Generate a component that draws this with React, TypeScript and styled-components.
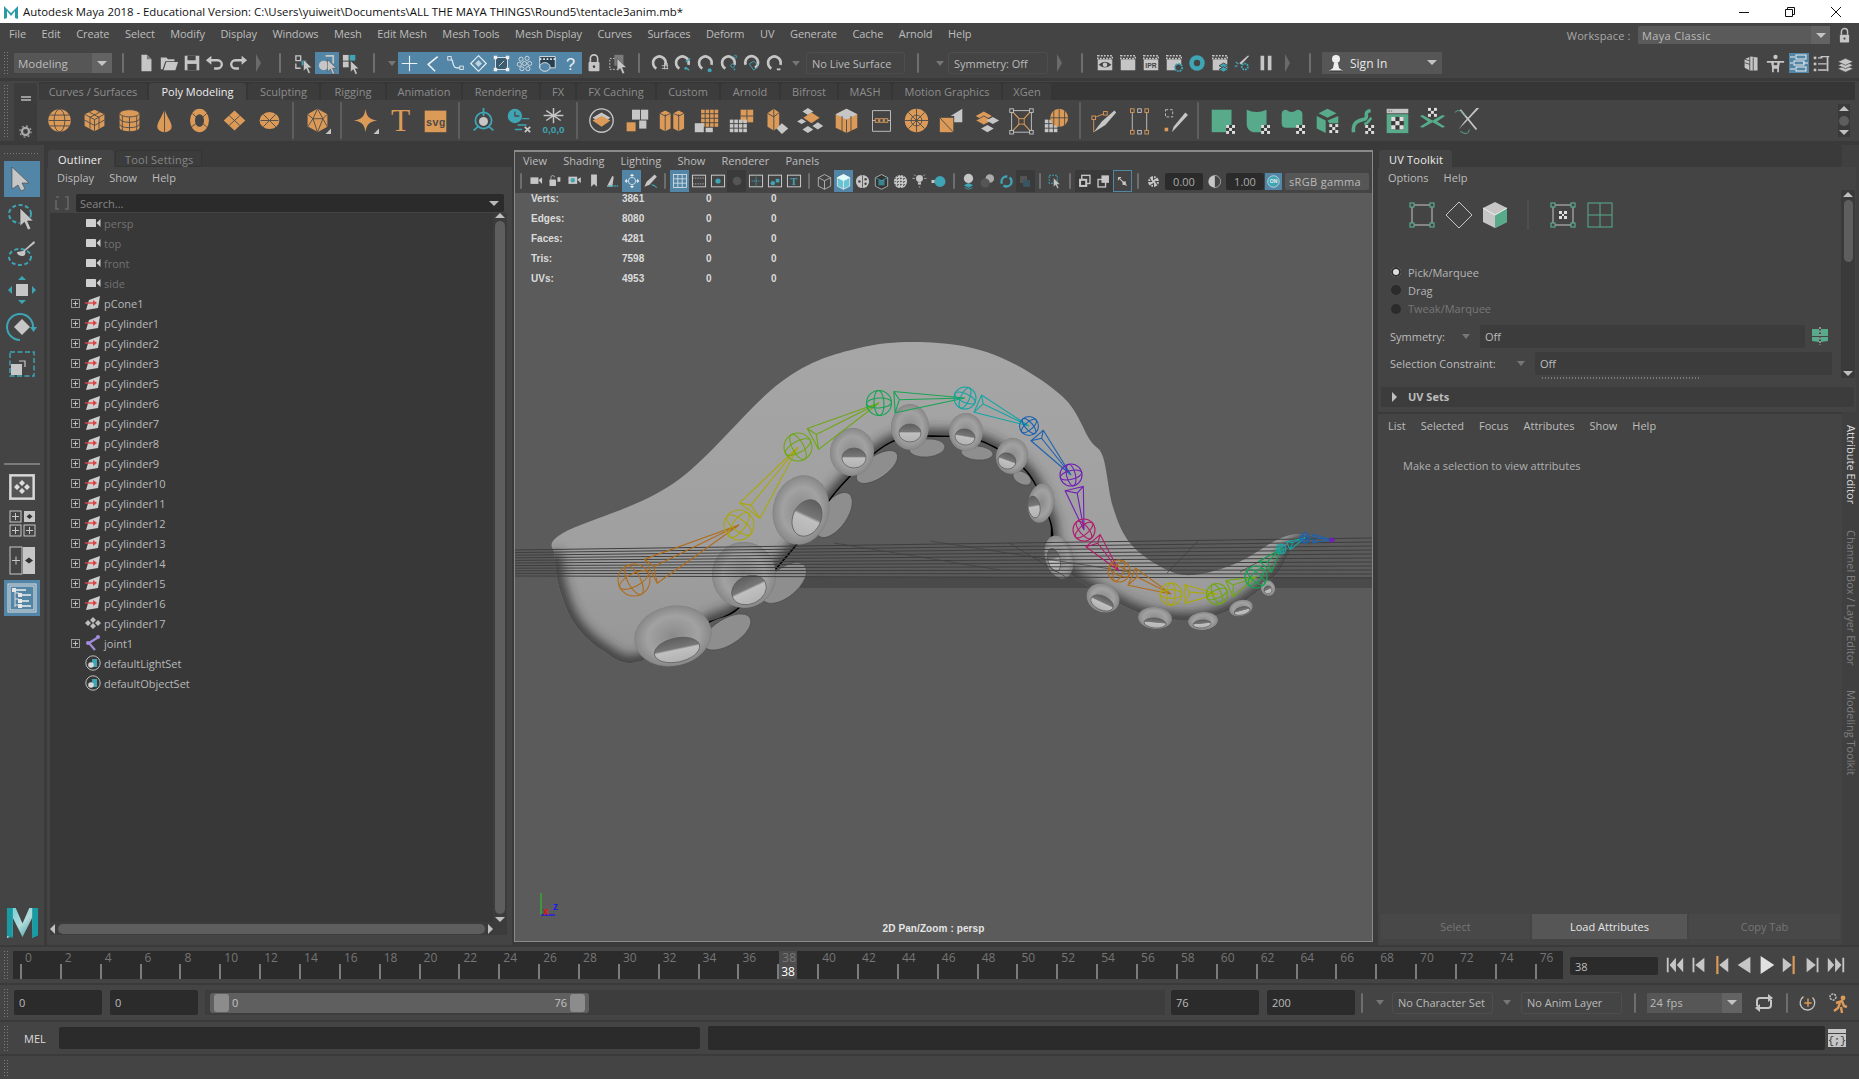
import React from "react";
import styled, { createGlobalStyle } from "styled-components";

const FONT = `"Open Sans", "Noto Sans", "Liberation Sans", sans-serif`;
const G = "#c6c6c6";
const T = "#3fa5b5";
const O = "#dc9a58";
const E = "#58ab8a";
const D = "#444444";
const BLUE = "#5285a6";

const Global = createGlobalStyle`
  html, body { margin: 0; padding: 0; background: #3a3a3a; overflow: hidden; }
  body { font-family: ${FONT}; font-size: 11px; color: #bdbdbd; }
  * { box-sizing: border-box; }
`;

const Page = styled.div`
  width: 1859px; height: 1079px; display: flex; flex-direction: column; background: #3a3a3a; overflow: hidden;
`;
const TitleBar = styled.div`
  height: 23px; flex: none; background: #fff; color: #111; display: flex; align-items: center; padding-left: 3px; font-size: 11.4px;
`;
const TitleText = styled.span` margin-left: 4px; flex: 1; white-space: nowrap; `;
const WinBtn = styled.span` width: 46px; height: 23px; display: flex; align-items: center; justify-content: center; flex: none; `;
const MenuBar = styled.div`
  height: 21px; flex: none; background: ${D}; display: flex; align-items: center; padding-left: 9px; gap: 15.6px; white-space: nowrap; letter-spacing: -0.01em;
`;
const MenuGrow = styled.span` flex: 1; `;
const WorkLabel = styled.span` margin-right: 7px; margin-top: 4px; color: #a8a8a8; letter-spacing: 0.01em; `;
const WorkBox = styled.div`
  width: 192px; height: 19px; margin-top: 4px; margin-right: -12.6px; margin-left: -15px; background: #5a5a5a; border-radius: 2px; display: flex; align-items: center; padding-left: 4px; justify-content: space-between; color: #bbb; letter-spacing: 0.03em;
`;
const BoxArrow = styled.span<{ $w?: number }>`
  width: ${p => p.$w || 19}px; align-self: stretch; background: #636363; display: flex; align-items: center; justify-content: center; flex: none;
  &::after { content: ""; border-left: 5px solid transparent; border-right: 5px solid transparent; border-top: 5px solid #c4c4c4; }
`;
const LockSlot = styled.span` width: 22px; display: flex; justify-content: center; margin-top: 4px; margin-right: 4px; `;

const StatusLine = styled.div`
  height: 34px; padding-top: 4px; flex: none; background: ${D}; display: flex; align-items: center;
`;
const Grip = styled.span<{ $w?: number }>`
  width: ${p => p.$w ?? 14}px; flex: none; align-self: stretch; position: relative;
  &::before { content: ""; position: absolute; left: 3px; top: 3px; bottom: 3px; width: 5px;
    background-image: radial-gradient(circle, #7a7a7a 0.7px, transparent 0.9px); background-size: 3px 3px; }
`;
const Slot = styled.span<{ $w?: number; $on?: boolean; $ring?: boolean; $dark?: boolean }>`
  width: ${p => p.$w || 23}px; height: 22px; flex: none; display: flex; align-items: center; justify-content: center;
  background: ${p => (p.$on ? BLUE : p.$dark ? "#3a3a3a" : "transparent")};
  ${p => p.$ring && `box-shadow: inset 0 0 0 1px ${BLUE};`}
`;
const Sep = styled.span<{ $w?: number; $h?: number }>`
  width: ${p => p.$w || 20}px; flex: none; display: flex; justify-content: center; align-items: center;
  &::after { content: ""; width: 2px; height: ${p => p.$h || 20}px; background: #6e6e6e; border-radius: 1px; }
`;
const DropTri = styled.span<{ $w?: number }>`
  width: ${p => p.$w || 14}px; flex: none; display: flex; justify-content: center;
  &::after { content: ""; border-left: 4px solid transparent; border-right: 4px solid transparent; border-top: 5px solid #767676; }
`;
const Chev = styled.span<{ $w?: number }>`
  width: ${p => p.$w || 20}px; flex: none; display: flex; justify-content: center;
  &::after { content: ""; border-top: 9px solid transparent; border-bottom: 9px solid transparent; border-left: 5px solid #6a6a6a; }
`;
const ModeBox = styled.div`
  width: 98px; height: 20px; flex: none; background: #565656; display: flex; align-items: center; justify-content: space-between; padding-left: 4px; color: #bcbcbd; font-size: 11.5px; border-radius: 1px;
`;
const OutBox = styled.div<{ $w: number }>`
  width: ${p => p.$w}px; height: 22px; flex: none; border: 1px solid #4e4e4e; border-radius: 3px; display: flex; align-items: center; padding-left: 5px; color: #bbb; white-space: nowrap;
`;
const SignIn = styled.div`
  width: 120px; height: 22px; flex: none; background: #565656; display: flex; align-items: center; padding-left: 5px; color: #e8e8e8; font-size: 12px; gap: 5px; position: relative;
  &::after { content: ""; position: absolute; right: 5px; top: 8px; border-left: 5px solid transparent; border-right: 5px solid transparent; border-top: 5px solid #c4c4c4; }
`;
const Grow = styled.span` flex: 1; `;

const Seam = styled.div<{ $h: number }>` height: ${p => p.$h}px; flex: none; background: #3a3a3a; `;

const ShelfArea = styled.div` height: 60px; flex: none; background: ${D}; display: flex; `;
const ShelfSide = styled.div`
  width: 23px; margin-top: 2px; flex: none; background: #3c3c3c; display: flex; flex-direction: column; align-items: center; justify-content: space-between; padding: 10px 0 3px;
`;
const ShelfMain = styled.div` flex: 1; display: flex; flex-direction: column; margin-left: 2px; `;
const ShelfTabs = styled.div` height: 18px; margin-top: 1px; margin-right: 4px; flex: none; background: #363636; display: flex; gap: 2px; `;
const ShelfTab = styled.div<{ $w: number; $on?: boolean }>`
  width: ${p => p.$w}px; margin-top: 1px; background: ${p => (p.$on ? D : "#3c3c3c")}; color: ${p => (p.$on ? "#eee" : "#8c8c8c")}; border-radius: 3px 3px 0 0; display: flex; align-items: center; justify-content: center; white-space: nowrap; flex: none;
`;
const ShelfRow = styled.div` flex: 1; display: flex; align-items: center; padding-left: 2.5px; position: relative; `;
const ShelfCell = styled.span` width: 35px; height: 34px; flex: none; display: flex; align-items: center; justify-content: center; `;
const ShelfSep = styled.span`
  width: 13px; flex: none; display: flex; justify-content: center;
  &::after { content: ""; width: 2px; height: 37px; background: #5e5e5e; }
`;
const ShelfScroll = styled.div`
  position: absolute; right: 9px; top: 4px; width: 12px; height: 33px; background: #3a3a3a; display: flex; flex-direction: column; align-items: center; justify-content: space-between; padding: 2px 0;
`;

const Main = styled.div` flex: none; height: 800px; display: flex; `;
const Toolbox = styled.div`
  width: 44px; flex: none; background: ${D}; display: flex; flex-direction: column; align-items: center; position: relative;
  &::before { content: ""; position: absolute; left: 3px; top: 7px; width: 36px; height: 3px; background-image: radial-gradient(circle, #7a7a7a 0.7px, transparent 0.9px); background-size: 3px 3px; }
`;
const ToolBtn = styled.span<{ $on?: boolean; $h?: number; $mt?: number }>`
  width: 36px; height: ${p => p.$h || 36}px; margin-top: ${p => p.$mt || 0}px; flex: none; display: flex; align-items: center; justify-content: center; background: ${p => (p.$on ? BLUE : "transparent")};
`;
const ToolStack = styled.div` margin-top: 16px; display: flex; flex-direction: column; gap: 1px; `;
const ToolRule = styled.div` width: 36px; height: 2px; background: #7a7a7a; margin-top: 81px; flex: none; `;
const LogoSlot = styled.div` margin-top: auto; margin-bottom: 5px; `;

const Outliner = styled.div` width: 465px; margin-left: 3px; flex: none; display: flex; flex-direction: column; background: ${D}; margin-right: 2px; `;
const TabStrip = styled.div` height: 22px; flex: none; background: #3a3a3a; display: flex; align-items: flex-end; gap: 1px; padding-left: 1px; `;
const PanelTab = styled.div<{ $w: number; $on?: boolean }>`
  width: ${p => p.$w}px; height: 17px; padding-top: 2px; background: ${p => (p.$on ? D : "#3c3c3c")}; color: ${p => (p.$on ? "#eee" : "#868686")}; border-radius: 3px 3px 0 0; padding-left: 10px; display: flex; align-items: center; letter-spacing: 0.02em; ${p => !p.$on && "box-shadow: inset 0 0 0 1px #353535;"}
`;
const PanelMenu = styled.div<{ $pl: number; $h?: number }>`
  height: ${p => p.$h || 20}px; flex: none; display: flex; align-items: center; gap: 15px; padding-left: ${p => p.$pl}px; color: #bdbdbd;
`;
const SearchRow = styled.div` height: 18px; margin-top: 7px; flex: none; display: flex; align-items: center; padding-left: 8px; `;
const SearchBox = styled.div`
  width: 428px; height: 18px; margin-left: 7px; background: #2b2b2b; border-radius: 2px; color: #858585; display: flex; align-items: center; justify-content: space-between; padding: 0 5px 0 4px;
  &::after { content: ""; border-left: 5px solid transparent; border-right: 5px solid transparent; border-top: 5px solid #b8b8b8; }
`;
const TreeFrame = styled.div`
  margin: 1px 5px 10px 3px; flex: 1; background: #383838; display: grid; grid-template-columns: 1fr 14px; grid-template-rows: 1fr 13px; min-height: 0;
`;
const TreeList = styled.div` min-height: 0; overflow: hidden; `;
const TreeRow = styled.div`
  height: 20px; display: flex; align-items: center; padding-left: 21px;
`;
const TreeExp = styled.span`
  width: 14px; flex: none; display: flex;
`;
const ExpBox = styled.span`
  width: 9px; height: 9px; border: 1px solid #9a9a9a; position: relative;
  &::before { content: ""; position: absolute; left: 1px; right: 1px; top: 3px; height: 1px; background: #bdbdbd; }
  &::after { content: ""; position: absolute; top: 1px; bottom: 1px; left: 3px; width: 1px; background: #bdbdbd; }
`;
const TreeIcon = styled.span` width: 16px; height: 16px; flex: none; display: flex; align-items: center; justify-content: center; `;
const TreeLabel = styled.span<{ $dim?: boolean }>` margin-left: 3px; color: ${p => (p.$dim ? "#727272" : "#b9b9b9")}; `;
const VBar = styled.div<{ $h?: boolean }>`
  background: #3c3c3c; display: flex; flex-direction: ${p => (p.$h ? "row" : "column")}; align-items: center; gap: 3px;
`;
const BarThumb = styled.div<{ $h?: boolean }>`
  flex: 1; background: #5e5e5e; border-radius: 5px; ${p => (p.$h ? "height: 10px;" : "width: 10px;")}
`;
const Arrow = styled.span<{ $d: "u" | "d" | "l" | "r" }>`
  flex: none; width: 0; height: 0;
  ${p => p.$d === "u" && "border-left:5px solid transparent;border-right:5px solid transparent;border-bottom:5px solid #c0c0c0;"}
  ${p => p.$d === "d" && "border-left:5px solid transparent;border-right:5px solid transparent;border-top:5px solid #c0c0c0;"}
  ${p => p.$d === "l" && "border-top:5px solid transparent;border-bottom:5px solid transparent;border-right:5px solid #c0c0c0;"}
  ${p => p.$d === "r" && "border-top:5px solid transparent;border-bottom:5px solid transparent;border-left:5px solid #c0c0c0;"}
`;
const Corner = styled.div` background: #3c3c3c; `;

const Viewport = styled.div`
  width: 859px; flex: none; display: flex; flex-direction: column; background: ${D}; border: solid #8a8a8a; border-width: 0 1px 1px 1px; margin-left: 0;
  margin-bottom: 3px; border-top: 2px solid #8a8a8a; margin-top: 5px;
`;
const ViewMenu = styled.div` height: 17px; flex: none; display: flex; align-items: center; padding-left: 8px; gap: 16.2px; `;
const ViewTools = styled.div` height: 24px; flex: none; display: flex; align-items: center; padding-left: 0; `;
const NumField = styled.span<{ $ml?: number }>`
  width: 38px; height: 17px; margin-left: ${p => p.$ml || 0}px; flex: none; background: #2b2b2b; border-radius: 2px; display: flex; align-items: center; justify-content: center; color: #aaa;
`;
const GammaBox = styled.span`
  width: 84px; height: 17px; margin-left: 2px; background: #565656; display: flex; align-items: center; padding-left: 4px; color: #bbb; letter-spacing: 0.03em; border-radius: 2px;
`;
const Canvas = styled.div` flex: 1; background: #5b5b5b; position: relative; overflow: hidden; `;
const SceneSvg = styled.svg` position: absolute; left: 0; top: -1px; `;
const Stats = styled.div`
  position: absolute; left: 16px; top: -5px; display: grid; grid-template-columns: 91px 60px 65px 30px; grid-auto-rows: 20px; align-items: center; font: bold 10px "Liberation Sans", sans-serif; color: #dcdcdc;
`;
const StatZero = styled.span` padding-left: 24px; `;
const Caption = styled.div`
  position: absolute; left: 0; right: 20px; bottom: 7px; text-align: center; font: bold 10px "Liberation Sans", sans-serif; color: #e4e4e4; letter-spacing: 0.01em;
`;

const RightCol = styled.div` width: 481px; margin-left: 5px; flex: none; display: flex; `;
const RightMain = styled.div` width: 464px; flex: none; display: flex; flex-direction: column; `;
const RightTabs = styled.div` height: 22px; flex: none; display: flex; align-items: flex-end; padding-left: 1px; `;
const UvPanel = styled.div` height: 245px; flex: none; background: ${D}; display: grid; grid-template-columns: 463px 1fr; margin-right: -14px; position: relative; `;
const UvBody = styled.div` display: flex; flex-direction: column; `;
const UvIcons = styled.div` height: 40px; margin-top: 8px; flex: none; display: flex; align-items: center; padding-left: 25px; `;
const UvCell = styled.span<{ $w?: number }>` width: ${p => p.$w || 37}px; flex: none; display: flex; align-items: center; justify-content: center; `;
const UvRule = styled.span` width: 2px; height: 30px; background: #4e4e4e; margin: 0 15px 0 14px; flex: none; `;
const RadioList = styled.div` margin-top: 28px; display: flex; flex-direction: column; gap: 0; padding-left: 13px; `;
const RadioRow = styled.div<{ $dim?: boolean }>`
  height: 18.3px; display: flex; align-items: center; gap: 7px; color: ${p => (p.$dim ? "#777" : "#b5b5b5")};
`;
const RadioDot = styled.span<{ $on?: boolean }>`
  width: 10px; height: 10px; border-radius: 50%; background: ${p => (p.$on ? "#ddd" : "#2b2b2b")}; box-shadow: inset 0 0 0 ${p => (p.$on ? "2px #2f2f2f" : "0 #000")};
`;
const FormRow = styled.div<{ $mt?: number }>` height: 23px; margin-top: ${p => p.$mt || 0}px; display: flex; align-items: center; padding-left: 12px; `;
const FormLabel = styled.span<{ $w: number }>` width: ${p => p.$w}px; flex: none; `;
const FormTri = styled(DropTri)` width: 17px; margin-right: 6px; `;
const FormValue = styled.span<{ $w: number }>`
  width: ${p => p.$w}px; height: 23px; margin-left: 0; flex: none; background: #3c3c3c; border-radius: 2px; display: flex; align-items: center; padding-left: 5px;
`;
const DotRule = styled.div`
  margin: 2px 0 0 163px; width: 158px; height: 2px; background-image: radial-gradient(circle, #7a7a7a 0.6px, transparent 0.8px); background-size: 3px 2px;
`;
const SetBar = styled.div`
  height: 20px; margin: 8px 0 0 3px; flex: none; width: 473px; background: #3c3c3c; display: flex; align-items: center; padding-left: 11px; gap: 11px; font-weight: 700; position: relative; border-radius: 2px;
`;
const UvScroll = styled.div`
  position: absolute; left: 463px; top: 23px; width: 14px; height: 188px; background: #3a3a3a; display: flex; flex-direction: column; align-items: center; padding: 2px 0; gap: 3px;
`;
const ScrollThumb = styled.span` width: 9px; height: 62px; background: #5e5e5e; border-radius: 5px; margin-bottom: auto; `;
const AttrPanel = styled.div` flex: 1; margin-top: 2px; background: ${D}; display: flex; flex-direction: column; `;
const AttrMsg = styled.div` margin: 22px 0 0 25px; color: #b0b0b0; `;
const AttrButtons = styled.div` margin-top: auto; margin-bottom: 6px; height: 25px; padding-left: 3px; display: flex; gap: 2px; `;
const AttrBtn = styled.div<{ $w: number; $on?: boolean }>`
  width: ${p => p.$w}px; background: ${p => (p.$on ? "#565656" : "#484848")}; color: ${p => (p.$on ? "#e6e6e6" : "#767676")}; display: flex; align-items: center; justify-content: center; flex: none;
`;
const SideTabs = styled.div` width: 17px; flex: none; background: #404040; display: flex; flex-direction: column; align-items: center; padding-top: 280px; `;
const SideTab = styled.div<{ $h: number; $on?: boolean; $mt?: number }>`
  writing-mode: vertical-rl; height: ${p => p.$h}px; margin-top: ${p => p.$mt || 0}px; color: ${p => (p.$on ? "#d8d8d8" : "#7e7e7e")}; white-space: nowrap; flex: none; line-height: 14px;
`;

const TimeRow = styled.div` height: 36px; flex: none; background: ${D}; display: flex; align-items: flex-start; `;
const Ruler = styled.div` width: 1550px; height: 28px; margin-top: 4px; flex: none; background: #2b2b2b; display: flex; padding-left: 7px; position: relative; `;
const RulerCell = styled.div`
  flex: 0 0 39.86px; height: 28px; position: relative;
  &::after { content: ""; position: absolute; left: 0; bottom: 0; width: 2px; height: 15px; background: #7c7c7c; }
`;
const RulerLabel = styled.span` display: block; padding-left: 5px; color: #767676; line-height: 14px; font-size: 12px; `;
const CurFrame = styled.div`
  position: absolute; left: 766px; top: 14px; width: 18px; height: 14px; color: #fff; display: flex; align-items: flex-end; justify-content: center; font-size: 12px; line-height: 14px;
`;
const CurShade = styled.div` position: absolute; left: 766px; top: 0; width: 18px; height: 28px; background: rgba(122, 122, 122, 0.42); `;
const FrameField = styled.div` width: 88px; height: 18px; margin: 10px 0 0 7px; background: #2b2b2b; border-radius: 2px; display: flex; align-items: center; padding-left: 5px; flex: none; `;
const PlayRow = styled.div` display: flex; height: 26px; margin-top: 5px; margin-left: 5px; align-items: center; `;
const PlayCell = styled.span` width: 23px; height: 22px; flex: none; display: flex; align-items: center; justify-content: center; `;

const RangeRow = styled.div` height: 35px; flex: none; background: ${D}; display: flex; align-items: center; `;
const Field = styled.div<{ $w?: number; $ml?: number }>`
  width: ${p => p.$w || 88}px; height: 25px; margin-left: ${p => p.$ml || 0}px; flex: none; background: #2b2b2b; border-radius: 2px; display: flex; align-items: center; padding-left: 5px; color: #bbb;
`;
const SliderTrack = styled.div` width: 960px; height: 25px; margin-left: 7px; flex: none; background: #3d3d3d; display: flex; align-items: center; padding-left: 5px; `;
const SliderThumb = styled.div`
  width: 379px; height: 20px; background: #5f5f5f; border-radius: 3px; display: flex; align-items: center; padding: 0 4px; color: #c4c4c4; gap: 3px;
`;
const Handle = styled.span` width: 15px; height: 18px; background: #8c8c8c; border-radius: 3px; flex: none; `;
const FpsBox = styled.div`
  width: 95px; height: 20px; flex: none; background: #565656; display: flex; align-items: center; justify-content: space-between; padding-left: 3px; color: #bbb; letter-spacing: 0.03em;
`;
const CmdRow = styled.div` height: 32px; flex: none; background: ${D}; display: flex; align-items: center; `;
const MelLabel = styled.span` width: 45px; padding-left: 10px; flex: none; color: #ddd; `;
const CmdInput = styled.div<{ $w: number; $ml?: number }>`
  width: ${p => p.$w}px; height: ${p => (p.$ml ? 24 : 22)}px; margin-left: ${p => p.$ml || 0}px; flex: none; background: #2b2b2b; border-radius: 2px;
`;
const HelpRow = styled.div` height: 23px; flex: none; background: ${D}; display: flex; `;

const Glyph = styled.svg` display: block; flex: none; overflow: visible; `;
const Ic = ({ s = 20, vb = 22, children }: any) => (
  <Glyph width={s} height={s} viewBox={`0 0 ${vb} ${vb}`}>{children}</Glyph>
);

/* ---------- small drawing helpers ---------- */
const Cur = ({ x = 0, y = 0, k = 1, f = G }: any) => (
  <path transform={`translate(${x} ${y}) scale(${k})`} d="M0 0v14l3.4-3 2.6 6 2.4-1-2.6-6h4.6z" fill={f} stroke="#333" strokeWidth={0.5} />
);
const Chk = ({ x, y }: any) => (
  <g transform={`translate(${x} ${y})`}>
    <rect width={10} height={10} fill="#3a3a3a" />
    <rect width={3.3} height={3.3} fill="#ddd" />
    <rect x={6.6} width={3.3} height={3.3} fill="#ddd" />
    <rect x={3.3} y={3.3} width={3.3} height={3.3} fill="#ddd" />
    <rect y={6.6} width={3.3} height={3.3} fill="#ddd" />
    <rect x={6.6} y={6.6} width={3.3} height={3.3} fill="#ddd" />
  </g>
);
const Mag = ({ extra }: any) => (
  <>
    <path d="M7 17 A7 7 0 1 1 17 13" fill="none" stroke={G} strokeWidth={3} />
    {extra}
  </>
);
const Clap = ({ children }: any) => (
  <>
    <rect x={3} y={3} width={16} height={3} fill="none" stroke={G} strokeDasharray="2 1.4" strokeWidth={1.6} />
    <rect x={3} y={7} width={16} height={12} fill={G} />
    {children}
  </>
);
const Corn = () => <path d="M30 24v6h-6z" fill={G} />;

const sline = (d: string) => <path d={d} fill="none" stroke="#ecf2f5" strokeWidth={1.3} />;

const statusA = [
  <><path d="M6 2h6l5 5v13H6z" fill={G} /><path d="M12 2l5 5h-5z" fill="#7a7a7a" /></>,
  <><path d="M2 5h6l2 2h7v2H7l-3 9H2z" fill={G} /><path d="M8 10h13l-3 9H5z" fill={G} /></>,
  <><path d="M3 3h16v16H3z" fill={G} /><rect x={6} y={3} width={9} height={5} fill={D} /><rect x={6} y={12} width={10} height={7} fill={D} /></>,
  <><path d="M6 8h8a4.5 4.5 0 0 1 0 9h-4" fill="none" stroke={G} strokeWidth={2.6} /><path d="M1 8l6-5v10z" fill={G} /></>,
  <><path d="M16 8H8a4.5 4.5 0 0 0 0 9h4" fill="none" stroke={G} strokeWidth={2.6} /><path d="M21 8l-6-5v10z" fill={G} /></>,
];
const selIcons = [
  <><path d="M3 3h5v5H3zM3 11v5h5" fill="none" stroke={G} strokeWidth={1.4} /><rect x={9} y={8} width={5} height={5} fill={T} /><Cur x={11} y={7} k={0.85} /></>,
  <><path d="M9 3h8v8" fill="none" stroke={G} strokeWidth={1.8} /><circle cx={7} cy={13} r={5} fill={G} /><Cur x={11} y={7} k={0.9} /></>,
  <><rect x={2} y={2} width={6} height={6} fill={G} /><rect x={9} y={2} width={6} height={6} fill={T} /><rect x={2} y={9} width={6} height={6} fill={G} /><Cur x={10} y={8} k={0.85} /></>,
];
const snapIcons = [
  sline("M11 2v18M2 11h18"),
  <><path d="M17 3L6 12l8 8" fill="none" stroke="#ecf2f5" strokeWidth={1.8} /></>,
  <>{sline("M4 5c6 0 2 10 8 11h5")}<rect x={2} y={3} width={4} height={4} fill={BLUE} stroke="#eee" /><rect x={16} y={14} width={4} height={4} fill={BLUE} stroke="#eee" /></>,
  <>{sline("M11 2l9 9-9 9-9-9z")}<path d="M11 7l4 4-4 4-4-4z" fill="#ecf2f5" opacity={0.7} /></>,
  <><rect x={4} y={4} width={14} height={14} fill="#3b5b70" stroke="#eee" /><rect x={2} y={2} width={4} height={4} fill="#eee" /><rect x={16} y={2} width={4} height={4} fill="#eee" /><rect x={2} y={16} width={4} height={4} fill="#eee" /><rect x={16} y={16} width={4} height={4} fill="#eee" /><path d="M14 8L8 14" stroke="#ddd" /></>,
  <g fill="none" stroke="#ddd" strokeWidth={1}><circle cx={7} cy={6} r={2.4} /><circle cx={14} cy={5} r={2.4} /><circle cx={5} cy={12} r={2.4} /><circle cx={11} cy={11} r={2.4} /><circle cx={17} cy={11} r={2.4} /><circle cx={8} cy={17} r={2.4} /><circle cx={15} cy={17} r={2.4} /></g>,
  <><path d="M2 3h18v13H2z" fill="#26404f" stroke="#eee" /><path d="M2 6h18" stroke="#eee" strokeDasharray="2 2" strokeWidth={2} /><ellipse cx={8} cy={15} rx={6} ry={5} fill={BLUE} stroke="#eee" /></>,
  <text x={11} y={18} textAnchor="middle" fontSize={19} fill="#ecf2f5" fontFamily="Liberation Sans">?</text>,
];
const lockIcon = (c = G) => <><path d="M7 10V6a4 4 0 0 1 8 0v4" fill="none" stroke={c} strokeWidth={1.8} /><rect x={5} y={10} width={12} height={10} rx={1} fill={c} /><circle cx={11} cy={15} r={1.4} fill={D} /></>;
const magnets = [
  <Mag extra={<path d="M13 14h7M16 11v7M13 17h7M19 11v7" stroke={G} strokeWidth={1} />} />,
  <Mag extra={<><path d="M14 10l5-4M14 16l4 3" stroke={T} strokeWidth={1.4} /><circle cx={14} cy={17} r={1.5} fill={T} /></>} />,
  <Mag extra={<circle cx={15} cy={19} r={2.2} fill={T} />} />,
  <Mag extra={<><circle cx={15} cy={14} r={2} fill="none" stroke={T} /><circle cx={18} cy={4} r={1.5} fill="none" stroke={T} /><circle cx={17} cy={18} r={1} fill={T} /></>} />,
  <><g transform="rotate(40 11 11)"><Mag /></g><path d="M8 12l5-3 5 5-5 5z" fill="none" stroke={T} /></>,
  <Mag extra={<path d="M13 18h4" stroke={G} strokeWidth={2} />} />,
];
const renders = [
  <Clap><path d="M4 13q7-7 14 0-7 6-14 0z" fill={D} /><circle cx={11} cy={13} r={2.5} fill={G} /></Clap>,
  <Clap />,
  <Clap><text x={11} y={17} textAnchor="middle" fontSize={7.5} fontWeight={700} fill={D} fontFamily="Liberation Sans">IPR</text></Clap>,
  <Clap><circle cx={16} cy={16} r={4} fill={D} stroke={T} strokeWidth={2} strokeDasharray="2 1" /></Clap>,
  <><circle cx={11} cy={11} r={8.5} fill={T} /><circle cx={11} cy={11} r={3.5} fill={D} /></>,
  <Clap><path d="M15 11l5 3-5 3-5-3z" fill={T} stroke={D} /><path d="M15 15l5 3-5 3-5-3z" fill={T} stroke={D} /></Clap>,
  <><path d="M18 3L9 13l-2-2 9-8z" fill={G} /><circle cx={13} cy={15} r={3.4} fill="none" stroke={T} strokeWidth={2} strokeDasharray="2 1" /><path d="M3 10l3 2M2 15l3-1" stroke={T} strokeWidth={1.4} /></>,
  <><rect x={5} y={3} width={4} height={16} fill={G} /><rect x={13} y={3} width={4} height={16} fill={G} /></>,
];
const rightIcons = [
  <><path d="M3 6l7-3 8 1v15h-9l-6-3z" fill={G} /><path d="M9 3v16M3 10l6 2M3 6l6 2M13 4v15" stroke={D} strokeWidth={1} /></>,
  <><circle cx={11} cy={3.5} r={2.5} fill={G} /><path d="M1 8h20v2h-5l-1 6v5h-2v-4h-4v4H7v-5L6 10H1z" fill={G} /><rect x={9} y={10} width={4} height={3} fill={D} /></>,
  <><rect x={1} y={1} width={20} height={20} fill={BLUE} /><g fill="none" stroke="#eee"><path d="M2 5h5M2 11h3M2 17h5M15 11h5" /><rect x={8} y={3} width={10} height={4} /><rect x={6} y={9} width={10} height={4} /><rect x={8} y={15} width={10} height={4} /></g></>,
  <><g fill={G}><rect x={2} y={3} width={3} height={3} /><rect x={2} y={10} width={3} height={3} /><rect x={2} y={17} width={3} height={3} /></g><path d="M7 4.5h5M7 11.5h10M7 18.5h10M10 3h10" stroke={G} strokeWidth={1.5} /><path d="M18 3v17" stroke={G} strokeWidth={2} /></>,
  <g fill={G} stroke={D} strokeWidth={0.8}><path d="M11 13l9 4-9 4-9-4z" /><path d="M11 9l9 4-9 4-9-4z" /><path d="M11 5l9 4-9 4-9-4z" /></g>,
];

const L = "#4a4a4a";
const shelfIcons: any[] = [
  <><circle cx={15} cy={15} r={12.5} fill={O} /><g fill="none" stroke={L} strokeWidth={1}><ellipse cx={15} cy={15} rx={6} ry={12.5} /><path d="M4 9h22M3 15h24M4 21h22" /></g></>,
  <><path d="M15 3l11 5v13l-11 6-11-6V8z" fill={O} /><path d="M4 8l11 6 11-6M15 14v13M9 5.5l11 6M21 5.5l-11 6M10 11v13M20 11v13M4 14.5l11 6 11-6" fill="none" stroke={L} /></>,
  <><path d="M4 7h22v16a11 4 0 0 1-22 0z" fill={O} /><ellipse cx={15} cy={7} rx={11} ry={4} fill={O} stroke={L} /><path d="M4 13a11 4 0 0 0 22 0M4 19a11 4 0 0 0 22 0M15 11v18M7 10v16M23 10v16" fill="none" stroke={L} /></>,
  <><path d="M15 3c3 8 8 14 8 19a8 6 0 0 1-16 0c0-5 5-11 8-19z" fill={O} /><path d="M15 3v25" stroke={L} /></>,
  <><ellipse cx={15} cy={15} rx={10.5} ry={13} fill={O} /><ellipse cx={15} cy={15} rx={5} ry={7} fill={D} /><path d="M7 7l5 5M23 7l-5 5M6 22l6-4M23 22l-5-4" stroke={L} /></>,
  <><path d="M15 4l12 11-12 11L3 15z" fill={O} /><path d="M9 9.5l12 11M21 9.5l-12 11" stroke={L} /></>,
  <><ellipse cx={15} cy={15} rx={11} ry={9.5} fill={O} /><path d="M5 15h20M8 8l14 14M22 8L8 22" stroke={L} /></>,
  "s",
  <><path d="M15 2l11 6v14l-11 6-11-6V8z" fill={O} /><path d="M15 2l-5 11 11 0zM4 8l6 5-6 9 11 6 6-15 5-5M10 13l5 15M21 13l5 9" fill="none" stroke={L} /><Corn /></>,
  "s",
  <><path d="M15 2c1 8 4 12 13 13-9 1-12 5-13 13-1-8-4-12-13-13 9-1 12-5 13-13z" fill={O} /><Corn /></>,
  <text x={15} y={27} textAnchor="middle" fontFamily="Liberation Serif" fontWeight={400} fontSize={35} fill={O}>T</text>,
  <><rect x={3} y={4} width={24} height={24} fill={O} /><text x={15} y={21} textAnchor="middle" fontSize={12} fontWeight={700} fill={L} fontFamily="Liberation Mono">svg</text></>,
  "s",
  <><path d="M15 1v9M4 26l6-5M26 26l-6-5" stroke={T} strokeWidth={2} /><circle cx={15} cy={15} r={9} fill="none" stroke={T} strokeWidth={2} /><circle cx={15} cy={16} r={5} fill={G} /></>,
  <><circle cx={11} cy={10} r={8} fill={T} /><path d="M11 5v5h5" stroke={L} strokeWidth={1.5} fill="none" /><path d="M19 13h8M14 20h10M11 25h8" stroke={T} strokeWidth={1.4} /><path d="M22 22l6 6M28 22l-6 6" stroke={G} strokeWidth={2} /></>,
  <><g stroke={G} strokeWidth={1.6}><path d="M15 1v17M7 4l16 11M23 4L7 15M4 9.5h22" /></g><text x={15} y={29} textAnchor="middle" fontSize={11} fontWeight={700} fill={T} fontFamily="Liberation Sans">0,0,0</text></>,
  "s",
  <><circle cx={15} cy={15} r={13} fill="none" stroke={G} strokeWidth={1.5} /><path d="M15 6l10 6-10 6-10-6z" fill={G} /><path d="M5 15l10-5 10 5-10 7z" fill={O} /></>,
  <><rect x={4} y={17} width={10} height={10} fill={O} /><rect x={10} y={3} width={9} height={11} fill={G} /><rect x={20} y={3} width={8} height={11} fill={G} /><rect x={18} y={15} width={8} height={9} fill={G} /></>,
  <><path d="M2 7l6-3 6 3v17l-6 3-6-3z M17 7l6-3 6 3v17l-6 3-6-3z" fill={O} /><path d="M8 8v19M23 8v19M2 7l6 3 6-3M17 7l6 3 6-3" fill="none" stroke={L} /></>,
  <><g fill={O}>{[9, 14, 19, 24].map(x => [3, 8, 13, 18].map(y => <rect key={`${x}${y}`} x={x} y={y} width={4} height={4} />))}</g><rect x={2} y={18} width={10} height={10} fill={G} /><rect x={14} y={23} width={8} height={5} fill={G} /></>,
  <><path d="M14 3h14v14H14z" fill={O} /><path d="M21 3v14M14 10h14" stroke={L} /><g fill={G}>{[2, 7, 12, 17].map(x => [14, 19, 24].map(y => <rect key={`${x}${y}`} x={x} y={y} width={4} height={4} />))}</g></>,
  <><path d="M5 7l7-5 6 4v16l-6 4-7-4z" fill={O} /><path d="M12 2v24M5 7l7 4 6-5" fill="none" stroke={L} /><path d="M21 18l7 6-7 6-6-6z" fill={G} /></>,
  <g fill={G}><path d="M11 1l6 4-6 4-6-4zM22 17l6 4-6 4-6-4zM11 21l6 4-6 4-6-4z" /><path d="M6 12l9-6 9 6-9 6z" fill={O} /><path d="M4 13l5 3-5 3-5-3z" /></g>,
  <><path d="M15 2l12 6v15l-12 6-12-6V8z" fill={O} /><path d="M15 2l12 6-12 6-12-6z" fill={G} /><path d="M15 14v15M10 10v17M20 10v17" stroke={L} fill="none" /></>,
  <><g fill="none" stroke={G}><path d="M5 4h20v23H5z" /><path d="M5 15h20" /></g><rect x={8} y={13} width={4} height={4} fill={L} stroke={O} /><rect x={13} y={13} width={4} height={4} fill={L} stroke={O} /><rect x={18} y={13} width={4} height={4} fill={L} stroke={O} /></>,
  <><circle cx={15} cy={15} r={13} fill={O} /><circle cx={15} cy={15} r={6} fill="none" stroke={L} /><path d="M2 15h26M15 2v26M6 6l18 18M24 6L6 24" stroke={L} /></>,
  <><path d="M2 12h15v16H2z" fill={O} /><path d="M2 12l15 16" stroke={L} /><path d="M14 10L27 2v15h-9V10z" fill={G} /></>,
  <><path d="M12 5l9 5-9 5-9-5z" fill={O} /><path d="M12 10l9 5-9 5-9-5z" fill={O} stroke={L} /><path d="M22 11l7 4-7 4-7-4z M16 20l7 4-7 4-7-4z" fill={G} /></>,
  <><path d="M4 4h22v24H4z" fill="none" stroke={G} /><path d="M4 4l22 24M26 4L4 28" stroke={O} strokeWidth={1.2} /><rect x={12} y={13} width={6} height={6} fill={D} stroke={O} /><g fill={D} stroke={G}><rect x={2} y={2} width={4} height={4} /><rect x={24} y={2} width={4} height={4} /><rect x={2} y={26} width={4} height={4} /><rect x={24} y={26} width={4} height={4} /></g></>,
  <><g fill={G}>{[2, 7, 12].map(x => [14, 19, 24].map(y => <rect key={`${x}${y}`} x={x} y={y} width={4} height={4} />))}</g><ellipse cx={18} cy={12} rx={10} ry={10} fill={O} /><path d="M8 12h20M18 2v20M12 4v16M24 4v16" stroke={L} fill="none" /></>,
  "s",
  <><path d="M3 12l13-5M3 12v16" stroke={O} fill="none" /><path d="M3 28l9-12 14-12 2 2-12 14z" fill={G} /><rect x={1} y={10} width={4} height={4} fill={D} stroke={O} /><rect x={14} y={5} width={4} height={4} fill={D} stroke={O} /></>,
  <><path d="M7 4v24M23 4v24" stroke={G} /><g fill={D} stroke={O}><rect x={5} y={2} width={4} height={4} /><rect x={21} y={2} width={4} height={4} /><rect x={5} y={26} width={4} height={4} /><rect x={21} y={26} width={4} height={4} /></g><rect x={13} y={2} width={4} height={4} fill={D} stroke={G} /><rect x={13} y={26} width={4} height={4} fill={D} stroke={G} /></>,
  <><path d="M5 3h8v8H5z" fill="none" stroke={G} strokeDasharray="3 2" /><rect x={4} y={23} width={4} height={4} fill={O} /><path d="M12 28l2-6 13-16 3 3-14 15z" fill={G} /></>,
  "s",
  <><path d="M3 3h22v25H3z" fill={E} /><Chk x={19} y={20} /></>,
  <><path d="M3 3q11 5 22 0v25H10q-7-2-7-9z" fill={E} /><Chk x={19} y={20} /></>,
  <><path d="M3 8q0-5 5-5 6 5 12 0 6 0 6 5v15H8q-5 0-5-5z" fill={E} /><Chk x={19} y={20} /></>,
  <><path d="M15 2l10 5-10 5-10-5z" fill={E} /><path d="M3 10l10 5v14l-10-5zM27 10v8h-10l-2-3z" fill={E} /><Chk x={17} y={19} /></>,
  <><path d="M24 4c-10 2 0 8-8 10-8 2-12 4-11 14" fill="none" stroke={E} strokeWidth={4} /><path d="M25 12c-3 2-3 6-8 7" fill="none" stroke={E} strokeWidth={3} /><Chk x={18} y={20} /></>,
  <><rect x={3} y={2} width={24} height={5} fill={G} /><path d="M5 4.5h4" stroke={D} strokeDasharray="1.5 1.5" /><rect x={3} y={8} width={24} height={21} fill={E} /><g transform="translate(8 11) scale(1.4)"><Chk x={0} y={0} /></g></>,
  <><g fill={E}><path d="M1 10l9 6-9 6 3 1 11-6 11 6 3-1-9-6 9-6-3-1-11 6-11-6z" /></g><Chk x={10} y={1} /></>,
  <><path d="M7 3l18 22" stroke={G} strokeWidth={2} /><path d="M28 1L13 17l-5 5-3 3 6-8L25 1z" fill={G} /><path d="M1 6q6-6 12 4M7 27q9 6 10-2" fill="none" stroke={E} /></>,
];

const viewIcons: any[][] = [
  [
    <><rect x={2} y={6} width={11} height={9} fill={G} /><path d="M13 10l5-4v9z" fill={G} /></>,
    <><rect x={2} y={9} width={9} height={9} rx={1} fill={G} /><path d="M4 9V6a2.5 2.5 0 0 1 5 0" stroke={G} fill="none" /><path d="M13 6h4v6h-4zM19 5v8z" fill={G} /></>,
    <><rect x={2} y={5} width={12} height={10} fill={G} /><circle cx={8} cy={10} r={3} fill={T} /><path d="M14 9l5-3v8z" fill={G} /></>,
    <path d="M7 2h8v17l-4-4-4 4z" fill={G} />,
    <><path d="M3 18L10 4l2 1-2 14H3z" fill={G} /><path d="M4 18h14" stroke={T} strokeDasharray="2 1" strokeWidth={2} /></>,
    <><path d="M2 11h18M11 2v18" stroke="#eee" /><circle cx={11} cy={11} r={5} fill={BLUE} stroke="#eee" /><path d="M11 1l-3 3h6zM11 21l-3-3h6zM1 11l3-3v6zM21 11l-3-3v6z" fill="#eee" /></>,
    <><path d="M2 19l3-7L16 2l3 3L9 16z" fill={G} /><path d="M12 16q4 1 7 4" stroke={T} fill="none" strokeWidth={1.6} /></>,
  ],
  [
    <><rect x={2} y={2} width={18} height={18} fill="none" stroke="#eee" /><path d="M2 8h18M2 14h18M8 2v18M14 2v18" stroke="#eee" /></>,
    <><rect x={2} y={3} width={18} height={16} fill="none" stroke={G} strokeWidth={1.4} /><path d="M2 7h18M2 15h18" stroke={G} strokeDasharray="2 1.4" /></>,
    <><rect x={2} y={3} width={18} height={16} fill="none" stroke={G} strokeWidth={1.4} /><circle cx={11} cy={11} r={3.6} fill={T} /></>,
    <><circle cx={11} cy={11} r={6} fill="#555" /></>,
    <><rect x={2} y={3} width={18} height={16} fill="none" stroke={G} strokeWidth={1.4} /><path d="M11 3v16M5 11h12" stroke={T} strokeDasharray="1.6 1.2" strokeWidth={1.4} /></>,
    <><rect x={2} y={3} width={18} height={16} fill="none" stroke={G} strokeWidth={1.4} /><circle cx={8} cy={14} r={3} fill={T} /><path d="M12 8h5v5h-5z" fill={T} /></>,
    <><rect x={2} y={3} width={18} height={16} fill="none" stroke={G} strokeWidth={1.4} /><text x={11} y={17} textAnchor="middle" fontSize={14} fontWeight={700} fill={T} fontFamily="Liberation Serif">T</text></>,
  ],
  [
    <><path d="M11 2l8 4v11l-8 4-8-4V6z" fill="none" stroke={G} /><path d="M3 6l8 4 8-4M11 10v11" fill="none" stroke={G} /></>,
    <><path d="M11 2l8 4v11l-8 4-8-4V6z" fill="#68c3d2" stroke="#eee" /><path d="M3 6l8 4 8-4-8-4zM11 10v11" fill="#dff" stroke="#eee" /></>,
    <><circle cx={11} cy={11} r={8.5} fill={G} /><path d="M11 3v16" stroke={D} /><circle cx={15} cy={8} r={1.6} fill={D} /><circle cx={15} cy={14} r={1.6} fill={D} /><circle cx={7} cy={11} r={1.6} fill={D} /></>,
    <><path d="M11 2l8 4v11l-8 4-8-4V6z" fill="#333" stroke={G} /><path d="M3 6l8 4 8-4" fill="none" stroke={T} /><path d="M7 9h8v7H7z" fill={T} opacity={0.7} /></>,
    <><circle cx={11} cy={11} r={8.5} fill={G} /><path d="M3 7h16M3 11h16M3 15h16M7 3v16M11 2v18M15 3v16" stroke={D} strokeDasharray="2 2" /></>,
    <><circle cx={11} cy={7} r={4.5} fill={G} /><rect x={9} y={12} width={4} height={3} fill={G} /><path d="M2 7h3M17 7h3M4 2l2 2M18 2l-2 2M10 18h2" stroke={G} /></>,
    <><circle cx={13} cy={11} r={7} fill={T} /><rect x={2} y={9} width={4} height={4} fill={G} /></>,
  ],
  [
    <><circle cx={11} cy={7} r={6} fill={G} /><path d="M5 16l6-3 6 3-6 3z" fill={T} /><path d="M6 19l5 2 5-2" stroke={T} fill="none" /></>,
    <><circle cx={14} cy={7} r={5.5} fill="#aaa" /><circle cx={8} cy={13} r={6} fill="#555" /></>,
    <circle cx={11} cy={11} r={6.5} fill="none" stroke={T} strokeWidth={3} strokeDasharray="14 3" />,
    <><rect x={4} y={4} width={9} height={9} fill="#555" /><rect x={8} y={9} width={9} height={9} fill="#3a5560" /></>,
  ],
  [<><path d="M3 3h11v11H3z" fill="none" stroke={T} strokeDasharray="2.5 1.5" strokeWidth={1.4} /><Cur x={9} y={7} k={0.85} /></>],
  [
    <><rect x={7} y={2} width={12} height={12} fill="none" stroke={G} strokeWidth={2} /><rect x={3} y={7} width={12} height={12} fill={G} /><rect x={6} y={10} width={6} height={6} fill="#333" /></>,
    <><rect x={8} y={2} width={11} height={11} fill={G} /><rect x={3} y={8} width={11} height={11} fill="none" stroke={G} strokeWidth={2} /></>,
    <><path d="M5 5l12 12M5 5v4M5 5h4" stroke={G} strokeWidth={1.5} fill="none" /><rect x={11} y={11} width={5} height={5} fill={G} /></>,
  ],
];

const SETS = ["persp", "top", "front", "side"];
const MESHES = ["pCone1", "pCylinder1", "pCylinder2", "pCylinder3", "pCylinder5", "pCylinder6", "pCylinder7", "pCylinder8", "pCylinder9", "pCylinder10", "pCylinder11", "pCylinder12", "pCylinder13", "pCylinder14", "pCylinder15", "pCylinder16"];

const CamIcon = () => <Ic s={15} vb={15}><rect x={0} y={3} width={10} height={8} rx={0.6} fill="#d0d0d0" /><path d="M10.5 7l4-4v8z" fill="#d0d0d0" /></Ic>;
const XformIcon = () => <Ic s={16} vb={16}><path d="M4 5L15 1l-2 12-12 2z" fill="#cfcfcf" /><path d="M0 8h10" stroke="#d44" strokeWidth={1.4} /><path d="M12 8l-4-3v6z" fill="#d44" /></Ic>;
const MeshIcon = () => <Ic s={16} vb={16}><g fill="#bdbdbd"><path d="M8 2l3 3-3 3-3-3zM8 8l3 3-3 3-3-3zM3 5l3 3-3 3-3-3zM13 5l3 3-3 3-3-3z" /></g></Ic>;
const JointIcon = () => <Ic s={16} vb={16}><path d="M12 3L4 8l6 7" fill="none" stroke="#a58cdc" strokeWidth={2.2} /><circle cx={13} cy={2} r={2} fill="#a58cdc" /><circle cx={3} cy={8} r={2} fill="#a58cdc" /></Ic>;
const SetIcon = () => <Ic s={16} vb={16}><circle cx={8} cy={8} r={7.2} fill="none" stroke="#bdbdbd" /><rect x={7} y={4} width={5} height={8} fill={T} /><circle cx={6} cy={10} r={2.8} fill="#d8d8d8" /></Ic>;

/* ---------- scene ---------- */
type P = [number, number];
const smooth = (p: P[]) => {
  let d = `M${p[0][0]} ${p[0][1]}`;
  for (let i = 0; i < p.length - 1; i++) {
    const a = p[i - 1] || p[i], b = p[i], c = p[i + 1], e = p[i + 2] || c;
    d += `C${(b[0] + (c[0] - a[0]) / 6).toFixed(1)} ${(b[1] + (c[1] - a[1]) / 6).toFixed(1)} ${(c[0] - (e[0] - b[0]) / 6).toFixed(1)} ${(c[1] - (e[1] - b[1]) / 6).toFixed(1)} ${c[0]} ${c[1]}`;
  }
  return d;
};
const TOP: P[] = [[554, 553], [563, 533], [674, 483], [781, 382], [859, 348], [938, 343], [1002, 358], [1063, 397], [1090, 440], [1103, 457], [1113, 507], [1130, 543], [1163, 568], [1193, 575], [1237, 563], [1277, 540], [1300, 534], [1327, 540]];
const LOW: P[] = [[1327, 540], [1297, 543], [1280, 570], [1263, 587], [1230, 610], [1190, 620], [1140, 613], [1090, 587], [1070, 573], [1052, 543], [1049, 520], [1027, 473], [984, 443], [941, 437], [891, 443], [841, 487], [799, 543], [741, 607], [709, 623], [638, 662], [602, 650], [574, 623], [559, 587], [554, 553]];
const BODY = smooth(TOP) + smooth(LOW).replace(/^M[^C]*/, "") + "Z";

const SUCK = [
  [673, 636, 39, 30, -12, 677, 650, 23, 12, -12], [744, 575, 32, 33, -8, 749, 590, 18, 14, -25], [801, 510, 28, 35, 12, 807, 518, 14, 19, 25],
  [852, 452, 22, 24, 10, 854, 458, 12, 10, 0], [910, 427, 19, 23, 0, 910, 433, 11, 9, 0], [966, 432, 17, 19, 0, 965, 437, 10, 8, 10],
  [1012, 456, 16, 18, 15, 1007, 461, 9, 8, 20], [1041, 503, 13, 20, 10, 1034, 507, 6, 11, -10], [1059, 557, 14, 22, -15, 1054, 560, 6, 12, -15],
  [1103, 598, 17, 14, 25, 1102, 603, 12, 7, 25], [1155, 618, 17, 11, 5, 1155, 623, 11, 5, 5], [1203, 621, 15, 9, -5, 1202, 624, 9, 4, -5],
  [1241, 608, 12, 8, -15, 1242, 611, 8, 4, -15], [1268, 588, 7, 8, -25, 1268, 590, 4, 4, -25],
];
const PADS = [[727, 632, 27, 13, -32], [784, 583, 27, 14, -40], [834, 515, 26, 13, -55], [877, 467, 24, 11, -35], [927, 448, 18, 9, -5], [977, 453, 16, 7, 5], [1022, 478, 10, 6, 30]];
const JOINTS: [number, number, number, string][] = [
  [634, 580, 16, "#b06c1c"], [739, 525, 15, "#aaa80c"], [798, 447, 14, "#6ea814"], [879, 403, 12.5, "#16a452"], [965, 398, 11, "#16a4a4"],
  [1029, 426, 9.5, "#1c62b0"], [1071, 475, 11, "#7020b4"], [1084, 530, 11, "#b01c6c"], [1119, 571, 11, "#b06c1c"], [1171, 594, 11, "#aaa80c"],
  [1217, 594, 10.5, "#6ea814"], [1256, 577, 11, "#16a452"], [1281, 549, 5, "#16a4a4"], [1305, 538, 5, "#1c62b0"],
];
const Joint = ({ j, next }: any) => {
  const [x, y, r, c] = j;
  const [nx, ny] = next;
  const dx = nx - x, dy = ny - y, len = Math.hypot(dx, dy), ux = dx / len, uy = dy / len;
  const bx = x + ux * (r + 3), by = y + uy * (r + 3), w = Math.min(r * 0.85, len * 0.22), px = -uy * w, py = ux * w;
  const a = [bx + px, by + py], b = [bx - px, by - py], e = [bx + ux * 5 - px * 0.2, by + uy * 5 - py * 0.2];
  const rot = (Math.atan2(dy, dx) * 180) / Math.PI;
  return (
    <g fill="none" stroke={c} strokeWidth={1.1}>
      <circle cx={x} cy={y} r={r} />
      <ellipse cx={x} cy={y} rx={r} ry={r * 0.4} transform={`rotate(${rot} ${x} ${y})`} />
      <ellipse cx={x} cy={y} rx={r * 0.4} ry={r} transform={`rotate(${rot} ${x} ${y})`} />
      <path d={`M${a}L${nx} ${ny}L${b}Z M${e}L${nx} ${ny} M${a}L${e}L${b}`} />
    </g>
  );
};
const gridLines = Array.from({ length: 11 }, (_, i) => [550 + i * 2.6, 538 + i * 4]);

const Scene = () => (
  <SceneSvg width={857} height={750} viewBox="515 192 857 750">
    <defs>
      <linearGradient id="bodyFill" x1="0" y1="0" x2="0" y2="1"><stop offset="0" stopColor="#a6a6a6" /><stop offset="0.6" stopColor="#a0a0a0" /><stop offset="1" stopColor="#969696" /></linearGradient>
      <radialGradient id="suck" cx="0.5" cy="0.5" r="0.55"><stop offset="0" stopColor="#8a8a8a" /><stop offset="0.6" stopColor="#a2a2a2" /><stop offset="0.88" stopColor="#8a8a8a" /><stop offset="1" stopColor="#4c4c4c" /></radialGradient>
      <linearGradient id="hole" x1="0" y1="0" x2="0" y2="1"><stop offset="0" stopColor="#5e5e5e" /><stop offset="0.42" stopColor="#767676" /><stop offset="0.5" stopColor="#c0c0c0" /><stop offset="1" stopColor="#b2b2b2" /></linearGradient>
      <filter id="blurA" x="-20%" y="-20%" width="140%" height="140%"><feGaussianBlur stdDeviation="6" /></filter>
      <clipPath id="bodyClip"><path d={BODY} /></clipPath>
    </defs>
    <rect x={800} y={577} width={572} height={11} fill="#4a4a4a" />
    {PADS.map((p, i) => (
      <ellipse key={i} cx={p[0]} cy={p[1]} rx={p[2]} ry={p[3]} fill="#8e8e8e" stroke="#444" strokeWidth={0.6} transform={`rotate(${p[4]} ${p[0]} ${p[1]})`} />
    ))}
    <path d={BODY} fill="url(#bodyFill)" />
    <g clipPath="url(#bodyClip)">
      <path d={smooth(LOW)} fill="none" stroke="#303030" strokeWidth={13} filter="url(#blurA)" />
      <path d={smooth(LOW.slice(9, 19))} fill="none" stroke="#000" strokeWidth={3} />
    </g>
    {SUCK.map((s, i) => (
      <g key={i}>
        <ellipse cx={s[0]} cy={s[1]} rx={s[2]} ry={s[3]} fill="url(#suck)" transform={`rotate(${s[4]} ${s[0]} ${s[1]})`} />
        <ellipse cx={s[5]} cy={s[6]} rx={s[7]} ry={s[8]} fill="url(#hole)" stroke="#585858" strokeWidth={0.7} transform={`rotate(${s[9]} ${s[5]} ${s[6]})`} />
      </g>
    ))}
    <g stroke="#3e3e3e" strokeWidth={1}>
      {gridLines.map((l, i) => <line key={i} x1={515} y1={l[0]} x2={1372} y2={l[1]} />)}
      <path d="M1009 543L1066 577M834 543L1000 570M1198 541L1167 573M1300 539L1240 572M930 541L1130 572" fill="none" opacity={0.7} />
    </g>
    {JOINTS.map((j, i) => <Joint key={i} j={j} next={JOINTS[i + 1] || [1332, 540]} />)}
    <circle cx={1332} cy={540} r={2.6} fill="#7020b4" />
    <path d="M541 893v22" stroke="#1fd41f" strokeWidth={1} />
    <path d="M541 915h14" stroke="#1a1aee" strokeWidth={1.4} />
    <text x={543} y={915} fontSize={10} fontWeight={700} fill="#e01212" fontFamily="Liberation Sans">x</text>
    <text x={553} y={910} fontSize={10} fontWeight={700} fill="#1a1aee" fontFamily="Liberation Sans">z</text>
  </SceneSvg>
);

const MENUS = ["File", "Edit", "Create", "Select", "Modify", "Display", "Windows", "Mesh", "Edit Mesh", "Mesh Tools", "Mesh Display", "Curves", "Surfaces", "Deform", "UV", "Generate", "Cache", "Arnold", "Help"];
const TABS: [string, number, boolean?][] = [["Curves / Surfaces", 108], ["Poly Modeling", 97, true], ["Sculpting", 71], ["Rigging", 64], ["Animation", 74], ["Rendering", 76], ["FX", 34], ["FX Caching", 78], ["Custom", 62], ["Arnold", 58], ["Bifrost", 56], ["MASH", 52], ["Motion Graphics", 108], ["XGen", 48]];
const STATS = [["Verts:", "3861"], ["Edges:", "8080"], ["Faces:", "4281"], ["Tris:", "7598"], ["UVs:", "4953"]];
const FRAMES = Array.from({ length: 39 }, (_, i) => i * 2);

const pb = (c: any) => <Ic s={20} vb={22}>{c}</Ic>;
const plays = [
  pb(<><rect x={2} y={3} width={2} height={16} fill={G} /><path d="M12 3L5 11l7 8zM20 3l-7 8 7 8z" fill={G} /></>),
  pb(<><rect x={5} y={3} width={2} height={16} fill={G} /><path d="M18 3l-10 8 10 8z" fill={G} /></>),
  pb(<><path d="M7 1v20" stroke={O} strokeWidth={2.4} /><path d="M19 3l-10 8 10 8z" fill={G} /></>),
  pb(<path d="M18 2L4 11l14 9z" fill={G} />),
  pb(<path d="M4 1l15 10L4 21z" fill="#e2e2e2" />),
  pb(<><path d="M15 1v20" stroke={O} strokeWidth={2.4} /><path d="M3 3l10 8-10 8z" fill={G} /></>),
  pb(<><rect x={15} y={3} width={2} height={16} fill={G} /><path d="M4 3l10 8-10 8z" fill={G} /></>),
  pb(<><rect x={18} y={3} width={2} height={16} fill={G} /><path d="M2 3l7 8-7 8zM10 3l7 8-7 8z" fill={G} /></>),
];

export default function App() {
  return (
    <Page>
      <Global />
      <TitleBar>
        <Ic s={16} vb={16}><path d="M1 15V2l7 7 7-7v13l-3-1V7L8 12 4 7v7z" fill="#2a9aa5" /></Ic>
        <TitleText>Autodesk Maya 2018 - Educational Version: C:\Users\yuiweit\Documents\ALL THE MAYA THINGS\Round5\tentacle3anim.mb*</TitleText>
        <WinBtn><Ic s={12} vb={12}><path d="M1 6.5h10" stroke="#111" /></Ic></WinBtn>
        <WinBtn><Ic s={12} vb={12}><path d="M1.5 3.5h7v7h-7zM3.5 3.5v-2h7v7h-2" fill="none" stroke="#111" /></Ic></WinBtn>
        <WinBtn><Ic s={12} vb={12}><path d="M1 1l10 10M11 1L1 11" stroke="#111" /></Ic></WinBtn>
      </TitleBar>

      <MenuBar>
        {MENUS.map(m => <span key={m}>{m}</span>)}
        <MenuGrow />
        <WorkLabel>Workspace :</WorkLabel>
        <WorkBox>Maya Classic<BoxArrow /></WorkBox>
        <LockSlot><Ic s={17}>{lockIcon()}</Ic></LockSlot>
      </MenuBar>

      <StatusLine>
        <Grip />
        <ModeBox>Modeling<BoxArrow $w={20} /></ModeBox>
        <Sep $w={22} />
        {statusA.map((c, i) => <Slot key={i}><Ic>{c}</Ic></Slot>)}
        <Chev $w={19} />
        <Sep $w={23} />
        {selIcons.map((c, i) => <Slot key={i} $w={24} $on={i === 1}><Ic s={21}>{c}</Ic></Slot>)}
        <Sep $w={22} />
        <DropTri $w={13} />
        {snapIcons.map((c, i) => <Slot key={i} $on><Ic s={19}>{c}</Ic></Slot>)}
        <Slot $w={24}><Ic s={20}>{lockIcon()}</Ic></Slot>
        <Slot $w={24}><Ic s={20}><path d="M2 6h9v12H2z" fill="none" stroke={G} strokeDasharray="2 1.5" /><rect x={7} y={2} width={10} height={12} fill="#7a7a7a" /><Cur x={10} y={6} /></Ic></Slot>
        <Sep $w={18} />
        {magnets.map((c, i) => <Slot key={i}><Ic>{c}</Ic></Slot>)}
        <DropTri $w={20} />
        <OutBox $w={99}>No Live Surface</OutBox>
        <Sep $w={26} />
        <DropTri $w={17} />
        <OutBox $w={100}>Symmetry: Off</OutBox>
        <Chev $w={22} />
        <Sep $w={23} />
        {renders.map((c, i) => <Slot key={i}><Ic>{c}</Ic></Slot>)}
        <Chev $w={20} />
        <Sep $w={25} />
        <SignIn>
          <Ic s={18} vb={18}><circle cx={9} cy={5} r={4} fill="#eee" /><path d="M7 9h4l1 5 4 3H2l4-3z" fill="#eee" /><path d="M3 17h12" stroke="#333" /></Ic>
          Sign In
        </SignIn>
        <Grow />
        {rightIcons.map((c, i) => <Slot key={i} $w={23.4}><Ic s={i === 2 ? 22 : 19}>{c}</Ic></Slot>)}
        <Grip $w={2} />
      </StatusLine>

      <Seam $h={3} />

      <ShelfArea>
        <Grip />
        <ShelfSide>
          <Ic s={12} vb={12}><path d="M1 4h10M1 7h10" stroke="#bbb" strokeWidth={1.6} /></Ic>
          <Ic s={13} vb={14}><circle cx={7} cy={7} r={3.8} fill="none" stroke="#aaa" strokeWidth={2.4} /><circle cx={7} cy={7} r={6} fill="none" stroke="#aaa" strokeWidth={1.3} strokeDasharray="2 2.7" /></Ic>
        </ShelfSide>
        <ShelfMain>
          <ShelfTabs>
            {TABS.map(t => <ShelfTab key={t[0]} $w={t[1]} $on={t[2]}>{t[0]}</ShelfTab>)}
          </ShelfTabs>
          <ShelfRow>
            {shelfIcons.map((c, i) => c === "s" ? <ShelfSep key={i} /> : <ShelfCell key={i}><Ic s={27} vb={30}>{c}</Ic></ShelfCell>)}
            <ShelfScroll><Arrow $d="u" /><Ic s={10} vb={10}><circle cx={5} cy={5} r={5} fill="#5e5e5e" /></Ic><Arrow $d="d" /></ShelfScroll>
          </ShelfRow>
        </ShelfMain>
      </ShelfArea>

      <Seam $h={4} />

      <Main>
        <Toolbox>
          <ToolStack>
            <ToolBtn $on><Ic s={32} vb={32}><path d="M6 4v22l6-4 3 6 4-2-3-6h7z" fill={G} stroke="#444" strokeWidth={0.6} /></Ic></ToolBtn>
            <ToolBtn><Ic s={32} vb={32}><ellipse cx={14} cy={14} rx={11} ry={9} fill="none" stroke={T} strokeWidth={2} strokeDasharray="4 2.5" /><Cur x={14} y={8} k={1.3} /></Ic></ToolBtn>
            <ToolBtn><Ic s={32} vb={32}><ellipse cx={14} cy={20} rx={11} ry={8} fill="none" stroke={T} strokeWidth={2} strokeDasharray="4 2.5" /><path d="M28 4L17 14l-6 1c0 3 3 4 6 4 2 0 3-3 2-5l10-8z" fill={G} /></Ic></ToolBtn>
            <ToolBtn><Ic s={32} vb={32}><rect x={10} y={10} width={12} height={12} fill={G} /><path d="M16 2l4 4h-8zM16 30l4-4h-8z" fill={T} /><path d="M2 16l4-4v8zM30 16l-4-4v8z" fill={T} /></Ic></ToolBtn>
            <ToolBtn><Ic s={32} vb={32}><path d="M27 17A13 13 0 1 0 14 29" fill="none" stroke={T} strokeWidth={2} /><path d="M16 8l8 8-8 8-8-8z" fill={G} /><path d="M24 16h7l-3.5 5z" fill={T} /></Ic></ToolBtn>
            <ToolBtn><Ic s={32} vb={32}><rect x={4} y={4} width={24} height={24} fill="none" stroke={T} strokeWidth={1.4} strokeDasharray="5 2.5" /><rect x={5} y={16} width={11} height={11} fill={G} /><path d="M13 13h6v6" fill="none" stroke={G} strokeWidth={1.2} /></Ic></ToolBtn>
          </ToolStack>
          <ToolRule />
          <ToolBtn $h={28} $mt={8}><Ic s={28} vb={28}><rect x={1} y={1} width={26} height={26} fill={G} /><rect x={3} y={3} width={22} height={22} fill="#555" stroke="#eee" /><g fill="#ddd"><path d="M14 7l3 3-3 3-3-3zM14 15l3 3-3 3-3-3zM9 11l3 3-3 3-3-3zM19 11l3 3-3 3-3-3z" /></g></Ic></ToolBtn>
          <ToolBtn $h={29} $mt={8}><Ic s={29} vb={29}>
            <g fill="none" stroke={G}><rect x={2} y={2} width={11} height={11} /><rect x={2} y={16} width={11} height={11} /><rect x={16} y={16} width={11} height={11} /><path d="M7.5 4v7M4 7.5h7M7.5 18v7M4 21.500h7M21.500 18v7M18 21.500h7" /></g>
            <rect x={16} y={2} width={11} height={11} fill={G} /><path d="M21.500 5l3 2.500-3 2.500-3-2.500z" fill="#333" />
          </Ic></ToolBtn>
          <ToolBtn $h={29} $mt={8}><Ic s={29} vb={29}>
            <rect x={2} y={1} width={12} height={27} fill="none" stroke={G} /><path d="M4 14.500h8M8 10.500v8" stroke={G} />
            <rect x={15} y={1} width={12} height={27} fill={G} /><path d="M21 11.500l4 3-4 3-4-3z" fill="#333" />
          </Ic></ToolBtn>
          <ToolBtn $h={36} $mt={5} $on><Ic s={32} vb={32}>
            <rect x={2} y={2} width={28} height={28} fill="none" stroke="#e2e2e2" /><rect x={4} y={4} width={24} height={24} fill="none" stroke="#e2e2e2" />
            <path d="M9 7v18M9 11h4M9 17h4M9 23h4" stroke="#ddd" fill="none" />
            <path d="M8 8h12M15 13h10M15 19h8M15 24h10" stroke="#eee" strokeWidth={1.6} />
            <g fill="#e6e6e6"><rect x={6} y={6} width={4} height={4} /><rect x={12} y={11} width={4} height={4} /><rect x={12} y={17} width={4} height={4} /><rect x={12} y={22} width={4} height={4} /></g>
          </Ic></ToolBtn>
          <LogoSlot>
            <Ic s={33} vb={34}>
              <defs><linearGradient id="logoM" x1="0" y1="0" x2="1" y2="1"><stop offset="0" stopColor="#6fd0d4" /><stop offset="0.5" stopColor="#b3dadb" /><stop offset="1" stopColor="#138d96" /></linearGradient></defs>
              <path d="M1 1h9l7 16L24 1h9v28l-6 3V11l-10 20L7 11v19l-6 2z" fill="url(#logoM)" />
              <path d="M1 1h6v31l-6-2zM33 1h-6v31l6-3z" fill="#1a9aa3" />
            </Ic>
          </LogoSlot>
        </Toolbox>

        <Outliner>
          <TabStrip>
            <PanelTab $w={66} $on>Outliner</PanelTab>
            <PanelTab $w={87}>Tool Settings</PanelTab>
          </TabStrip>
          <PanelMenu $pl={10}><span>Display</span><span>Show</span><span>Help</span></PanelMenu>
          <SearchRow>
            <Ic s={14} vb={14}><path d="M1 1h3M10 1h3v3M13 10v3h-3M4 13H1v-3M1 4v6M13 4v6" fill="none" stroke="#666" strokeWidth={1.6} /></Ic>
            <SearchBox>Search...</SearchBox>
          </SearchRow>
          <TreeFrame>
            <TreeList>
              {SETS.map(n => (
                <TreeRow key={n}><TreeExp /><TreeIcon><CamIcon /></TreeIcon><TreeLabel $dim>{n}</TreeLabel></TreeRow>
              ))}
              {MESHES.map(n => (
                <TreeRow key={n}><TreeExp><ExpBox /></TreeExp><TreeIcon><XformIcon /></TreeIcon><TreeLabel>{n}</TreeLabel></TreeRow>
              ))}
              <TreeRow><TreeExp /><TreeIcon><MeshIcon /></TreeIcon><TreeLabel>pCylinder17</TreeLabel></TreeRow>
              <TreeRow><TreeExp><ExpBox /></TreeExp><TreeIcon><JointIcon /></TreeIcon><TreeLabel>joint1</TreeLabel></TreeRow>
              <TreeRow><TreeExp /><TreeIcon><SetIcon /></TreeIcon><TreeLabel>defaultLightSet</TreeLabel></TreeRow>
              <TreeRow><TreeExp /><TreeIcon><SetIcon /></TreeIcon><TreeLabel>defaultObjectSet</TreeLabel></TreeRow>
            </TreeList>
            <VBar><Arrow $d="u" /><BarThumb /><Arrow $d="d" /></VBar>
            <VBar $h><Arrow $d="l" /><BarThumb $h /><Arrow $d="r" /></VBar>
            <Corner />
          </TreeFrame>
        </Outliner>

        <Viewport>
          <ViewMenu><span>View</span><span>Shading</span><span>Lighting</span><span>Show</span><span>Renderer</span><span>Panels</span></ViewMenu>
          <ViewTools>
            <Sep $w={12} $h={16} />
            {viewIcons[0].map((c, i) => <Slot key={i} $w={19} $on={i === 5}><Ic s={16}>{c}</Ic></Slot>)}
            <Sep $w={10} $h={16} />
            {viewIcons[1].map((c, i) => <Slot key={i} $w={19} $on={i === 0} $dark={i === 3}><Ic s={16}>{c}</Ic></Slot>)}
            <Sep $w={12} $h={16} />
            {viewIcons[2].map((c, i) => <Slot key={i} $w={19} $on={i === 1}><Ic s={17}>{c}</Ic></Slot>)}
            <Sep $w={11} $h={16} />
            {viewIcons[3].map((c, i) => <Slot key={i} $w={19} $dark={i === 3}><Ic s={17}>{c}</Ic></Slot>)}
            <Sep $w={10} $h={16} />
            <Slot $w={19}><Ic s={16}>{viewIcons[4][0]}</Ic></Slot>
            <Sep $w={11} $h={16} />
            {viewIcons[5].map((c, i) => <Slot key={i} $w={19} $dark={i < 2} $ring={i === 2}><Ic s={15}>{c}</Ic></Slot>)}
            <Sep $w={12} $h={16} />
            <Slot $w={19}><Ic s={15}><circle cx={11} cy={11} r={8} fill={G} /><path d="M11 3v5l5-3M19 11h-5l3 5M11 19v-5l-5 3M3 11h5L5 6" stroke={D} fill="none" strokeWidth={1.5} /></Ic></Slot>
            <NumField $ml={2}>0.00</NumField>
            <Slot $w={23}><Ic s={15}><path d="M11 2a9 9 0 0 0 0 18z" fill={G} /><path d="M11 2a9 9 0 0 1 0 18z" fill="none" stroke={G} /></Ic></Slot>
            <NumField>1.00</NumField>
            <Slot $w={19}><Ic s={17}><rect x={0} y={0} width={22} height={22} fill={BLUE} /><circle cx={11} cy={11} r={7.5} fill={T} stroke="#ddd" /><text x={11} y={13.500} fontSize={6.5} fontWeight={700} textAnchor="middle" fill="#eee" fontFamily="Liberation Sans">ON</text></Ic></Slot>
            <GammaBox>sRGB gamma</GammaBox>
          </ViewTools>
          <Canvas>
            <Scene />
            <Stats>
              {STATS.map(r => (
                <React.Fragment key={r[0]}>
                  <span>{r[0]}</span><span>{r[1]}</span><StatZero>0</StatZero><StatZero>0</StatZero>
                </React.Fragment>
              ))}
            </Stats>
            <Caption>2D Pan/Zoom : persp</Caption>
          </Canvas>
        </Viewport>

        <RightCol>
          <RightMain>
            <RightTabs><PanelTab $w={73} $on>UV Toolkit</PanelTab></RightTabs>
            <UvPanel>
              <UvBody>
                <PanelMenu $pl={10}><span>Options</span><span>Help</span></PanelMenu>
                <UvIcons>
                  <UvCell><Ic s={26} vb={26}><rect x={3} y={3} width={20} height={20} fill="none" stroke={G} /><g fill={D} stroke={E} strokeWidth={1.2}><rect x={1} y={1} width={4} height={4} /><rect x={21} y={1} width={4} height={4} /><rect x={1} y={21} width={4} height={4} /><rect x={21} y={21} width={4} height={4} /></g></Ic></UvCell>
                  <UvCell><Ic s={28} vb={28}><path d="M14 1l13 13-13 13L1 14z" fill="none" stroke={G} /></Ic></UvCell>
                  <UvCell $w={36}><Ic s={28} vb={28}><path d="M14 1l12 6v14l-12 6-12-6V7z" fill={G} /><path d="M26 7v14l-12 6V14z" fill={E} /><path d="M2 7l12 7 12-7" fill="none" stroke="#eee" /></Ic></UvCell>
                  <UvRule />
                  <UvCell $w={37}><Ic s={26} vb={26}><rect x={3} y={3} width={20} height={20} fill="none" stroke={G} /><g fill={D} stroke={E} strokeWidth={1.2}><rect x={1} y={1} width={4} height={4} /><rect x={21} y={1} width={4} height={4} /><rect x={1} y={21} width={4} height={4} /><rect x={21} y={21} width={4} height={4} /></g><g fill="#ddd"><rect x={9} y={9} width={3} height={3} /><rect x={14} y={9} width={3} height={3} /><rect x={12} y={12} width={2} height={2} /><rect x={9} y={14} width={3} height={3} /><rect x={14} y={14} width={3} height={3} /></g></Ic></UvCell>
                  <UvCell><Ic s={26} vb={26}><rect x={1} y={1} width={24} height={24} fill="none" stroke={E} /><path d="M13 1v24M1 13h24" stroke={E} /></Ic></UvCell>
                </UvIcons>
                <RadioList>
                  <RadioRow><RadioDot $on />Pick/Marquee</RadioRow>
                  <RadioRow><RadioDot />Drag</RadioRow>
                  <RadioRow $dim><RadioDot />Tweak/Marquee</RadioRow>
                </RadioList>
                <FormRow $mt={7}>
                  <FormLabel $w={67}>Symmetry:</FormLabel>
                  <FormTri /><FormValue $w={325}>Off</FormValue>
                  <UvCell $w={30}><Ic s={18} vb={18}><path d="M1 2h7v7H1zM10 2h7v7h-7zM1 10h7v5l-7-1zM10 10h7v4l-7 1z" fill={E} /><path d="M9 0v18" stroke="#ddd" strokeDasharray="2 1.5" /></Ic></UvCell>
                </FormRow>
                <FormRow $mt={4}>
                  <FormLabel $w={122}>Selection Constraint:</FormLabel>
                  <FormTri /><FormValue $w={297}>Off</FormValue>
                </FormRow>
                <DotRule />
                <SetBar><Arrow $d="r" />UV Sets</SetBar>
              </UvBody>
              <UvScroll><Arrow $d="u" /><ScrollThumb /><Arrow $d="d" /></UvScroll>
            </UvPanel>
            <AttrPanel>
              <PanelMenu $pl={10} $h={22}><span>List</span><span>Selected</span><span>Focus</span><span>Attributes</span><span>Show</span><span>Help</span></PanelMenu>
              <AttrMsg>Make a selection to view attributes</AttrMsg>
              <AttrButtons>
                <AttrBtn $w={149}>Select</AttrBtn>
                <AttrBtn $w={155} $on>Load Attributes</AttrBtn>
                <AttrBtn $w={151}>Copy Tab</AttrBtn>
              </AttrButtons>
            </AttrPanel>
          </RightMain>
          <SideTabs>
            <SideTab $h={82} $on>Attribute Editor</SideTab>
            <SideTab $h={135} $mt={23}>Channel Box / Layer Editor</SideTab>
            <SideTab $h={87} $mt={25}>Modeling Toolkit</SideTab>
          </SideTabs>
        </RightCol>
      </Main>

      <Seam $h={2} />
      <TimeRow>
        <Grip $w={13} />
        <Ruler>
          {FRAMES.map(f => <RulerCell key={f}><RulerLabel>{f}</RulerLabel></RulerCell>)}
          <CurShade />
          <CurFrame>38</CurFrame>
        </Ruler>
        <FrameField>38</FrameField>
        <PlayRow>{plays.map((c, i) => <PlayCell key={i}>{c}</PlayCell>)}</PlayRow>
      </TimeRow>
      <Seam $h={2} />
      <RangeRow>
        <Grip />
        <Field>0</Field>
        <Field $ml={8}>0</Field>
        <SliderTrack>
          <SliderThumb><Handle />0<Grow />76<Handle /></SliderThumb>
        </SliderTrack>
        <Field $ml={6}>76</Field>
        <Field $ml={8}>200</Field>
        <Sep $w={13} />
        <DropTri $w={24} />
        <OutBox $w={101}>No Character Set</OutBox>
        <DropTri $w={28} />
        <OutBox $w={101}>No Anim Layer</OutBox>
        <Sep $w={25} />
        <FpsBox>24 fps<BoxArrow $w={20} /></FpsBox>
        <Slot $w={44}><Ic s={22}><path d="M4 14V9q0-3 3-3h9M18 8v5q0 3-3 3H6" fill="none" stroke={G} strokeWidth={2} /><path d="M15 2l5 4-5 4zM7 12l-5 4 5 4z" fill={G} /></Ic></Slot>
        <Sep $w={2} />
        <Slot $w={40}><Ic s={20}><path d="M16 5a8 8 0 1 1-10-1" fill="none" stroke={G} strokeWidth={1.4} /><path d="M11 6v9M7 11h8" stroke={O} strokeWidth={1.6} /></Ic></Slot>
        <Slot $w={20}><Ic s={22}><circle cx={6} cy={5} r={3} fill="none" stroke={G} strokeWidth={1.4} strokeDasharray="2 1" /><circle cx={16} cy={6} r={2.4} fill={O} /><path d="M9 11l6-2 2 5 3 1M13 11l-2 5-4 3M14 15l1 6" fill="none" stroke={O} strokeWidth={2.4} /></Ic></Slot>
      </RangeRow>
      <Seam $h={2} />
      <CmdRow>
        <Grip />
        <MelLabel>MEL</MelLabel>
        <CmdInput $w={641} />
        <CmdInput $w={1117} $ml={8} />
        <Slot $w={24}><Ic s={20} vb={20}><rect x={1} y={1} width={18} height={4} fill={G} /><rect x={1} y={6} width={18} height={13} fill={G} /><text x={10} y={16} fontSize={10} textAnchor="middle" fill="#333" fontFamily="Liberation Mono">{"{;}"}</text></Ic></Slot>
      </CmdRow>
      <Seam $h={2} />
      <HelpRow><Grip /></HelpRow>
    </Page>
  );
}
